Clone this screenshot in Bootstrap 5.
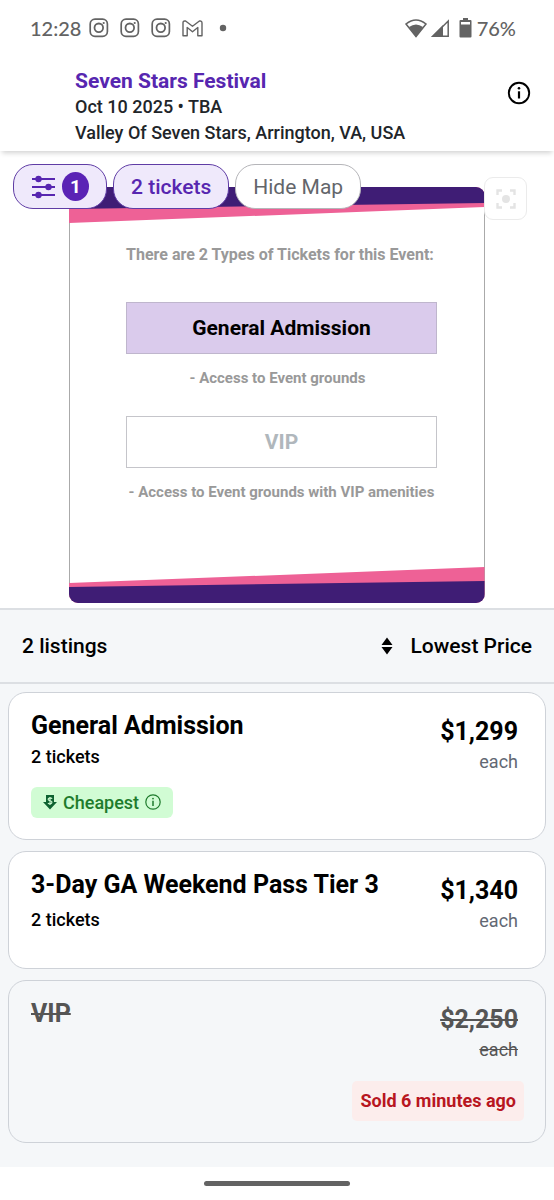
<!DOCTYPE html>
<html lang="en">
<head>
<meta charset="utf-8">
<meta name="viewport" content="width=device-width, initial-scale=1">
<title>Seven Stars Festival – Tickets</title>
<link href="https://cdn.jsdelivr.net/npm/bootstrap@5.3.0/dist/css/bootstrap.min.css" rel="stylesheet">
<style>
  body { font-family: Roboto, "Liberation Sans", sans-serif; color: #000; background: #fff; font-size: 18px; line-height: 26px; }
  svg { display: block; flex: none; }
  h1, h2, p { margin: 0; }
  .status-bar { height: 56px; padding: 0 38px 0 30px; color: #636363; font-size: 20px; font-family: Lato, Roboto, sans-serif; font-weight: 500; }
  .notices { gap: 11px; margin-left: 8px; }
  .battery { margin: 0 5px 0 10px; }
  .event-header { position: relative; z-index: 2; padding: 12px 23px 5px 75px; color: #212529; font-weight: 500; box-shadow: 0 4px 5px -2px rgba(0,0,0,.18); }
  .event-header h1 { font-size: 21px; line-height: 26px; font-weight: 700; }
  .event-header a { color: #5726b0; text-decoration: none; }
  .icon-btn { border: 0; background: none; padding: 0; color: #000; margin-top: 13px; }

  .map-area { padding: 36px 0 5px; border-bottom: 2px solid #dcdfe3; }
  .filters { top: 13px; left: 13px; gap: 6px; z-index: 1; }
  .pill { height: 45px; padding: 0 17px; border: 1px solid #b5b5b9; border-radius: 20px; background: #fff; color: #63666b; font-size: 21px; line-height: 26px; }
  .pill-on { background: #efe9fb; border-color: #5f3ca5; color: #5726b0; font-weight: 500; }
  .pill-filter { gap: 7px; }
  .pill-count { width: 27px; height: 29px; border-radius: 50%; background: #5a23b5; color: #fff; font-size: 19px; line-height: 29px; font-weight: 700; }
  .recenter { top: 26px; right: 27px; width: 43px; height: 43px; border: 1px solid #ebebeb; border-radius: 9px; background: #fff; color: #e4e4e4; padding: 0; }

  .seat-map { width: 75%; aspect-ratio: 1; border-radius: 9px; overflow: hidden; background: linear-gradient(#aaa, #aaa) left / 1px 100% no-repeat, linear-gradient(#aaa, #aaa) right / 1px 100% no-repeat, #fff; }
  .band { width: 100%; height: 36px; }
  .map-body { width: 77%; padding: 19px 0 0 9px; color: #999; font-size: 16px; font-weight: 700; white-space: nowrap; }
  .zone { height: 52px; border: 1px solid #c5c5ca; background: #fff; color: #b0b7bc; font-size: 21px; line-height: 26px; font-weight: 700; padding: 0; margin-top: 25px; }
  .zone-on { background: #dacbec; border-color: #bfb6cd; color: #000; margin-top: 34px; }
  .zone-note { font-size: 15px; padding-top: 11px; }

  .results { background: #f5f7f9; padding-bottom: 24px; }
  .results-bar { height: 74px; padding: 0 22px; border-bottom: 2px solid #dcdfe3; font-size: 21px; font-weight: 500; }
  .sort { border: 0; background: none; padding: 0; color: inherit; font-weight: 500; gap: 18px; }
  .listings { gap: 11px; }
  .listing { border: 1px solid #ced2d8; border-radius: 18px; background: #fff; padding: 19px 27px 21px 22px; }
  .listing h2, .price { font-size: 25px; line-height: 28px; font-weight: 700; }
  .listing-info { font-weight: 500; }
  .price-box { padding-top: 6px; }
  .per { color: #626873; line-height: 26px; margin-top: 3px; }
  .listing-short { padding-bottom: 34px; }
  .tag-cheap { background: #d1fcd4; color: #1e7b2c; border-radius: 6px; padding: 3px 12px; height: 31px; gap: 6px; line-height: 25px; margin-top: 17px; }
  .listing-sold { background: transparent; color: #555; }
  .listing-sold .per { color: #555; }
  .tag-sold { background: #fcedec; color: #b8161f; border-radius: 5px; padding: 7px 8px; font-weight: 700; margin: 18px -6px 0 0; line-height: 26px; }
  .home-bar { width: 146px; height: 5px; border-radius: 3px; background: #636363; margin: 14px auto; }
</style>
</head>
<body>
<svg width="0" height="0" class="position-absolute" aria-hidden="true">
  <symbol id="insta" viewBox="0 0 20 20"><rect x="1.2" y="1.2" width="17.2" height="17.2" rx="4.8" fill="none" stroke="currentColor" stroke-width="1.7"/><circle cx="9.8" cy="9.8" r="4.3" fill="none" stroke="currentColor" stroke-width="1.8"/><circle cx="14.7" cy="5" r="1.1" fill="currentColor"/></symbol>
</svg>

<div class="status-bar d-flex align-items-center">
  <span>12:28</span>
  <div class="notices d-flex align-items-center">
    <svg width="20" height="20"><use href="#insta"/></svg>
    <svg width="20" height="20"><use href="#insta"/></svg>
    <svg width="20" height="20"><use href="#insta"/></svg>
    <svg width="21" height="17" viewBox="0 0 21 17" fill="none" stroke="currentColor" stroke-width="1.4" stroke-linejoin="round"><path d="M1 15.800V2.800Q1 1 2.600 1H3.600L10.500 6.300 17.400 1H18.400Q20 1 20 2.800V15.800H15.800V7.500L10.500 11.700 5.200 7.500V15.800Z"/></svg>
    <svg class="ms-1" width="10" height="8"><circle cx="5" cy="4" r="3.200" fill="currentColor"/></svg>
  </div>
  <svg class="ms-auto" width="22" height="19" viewBox="0 0 22 19"><path d="M1 5Q11-3 21 5L11 17.500Z" fill="none" stroke="currentColor" stroke-width="1.600"/><path d="M4 8Q11 3 18 8L11 18Z" fill="currentColor"/></svg>
  <svg class="ms-1" width="18" height="18" viewBox="0 0 18 18"><path d="M0 18 12 6V18Z" fill="currentColor"/><path d="M2 17.200H17.200V2Z" fill="none" stroke="currentColor" stroke-width="1.500"/></svg>
  <svg class="battery" width="13" height="20" viewBox="0 0 13 20" fill="currentColor"><path fill-rule="evenodd" d="M4 0H9V2H11.500Q12.500 2 12.500 3V18.500Q12.500 19.500 11.500 19.500H1.500Q.5 19.500.5 18.500V3Q.5 2 1.500 2H4ZM2 4V6.500H11V4Z"/></svg>
  <span>76%</span>
</div>

<header class="event-header d-flex justify-content-between">
  <div>
    <h1><a href="#">Seven Stars Festival</a></h1>
    <p>Oct 10 2025 • TBA</p>
    <p>Valley Of Seven Stars, Arrington, VA, USA</p>
  </div>
  <button class="icon-btn align-self-start" aria-label="Event info">
    <svg width="24" height="24" viewBox="0 0 24 24"><circle cx="12" cy="12" r="10.200" fill="none" stroke="currentColor" stroke-width="1.900"/><path d="M12 10.300V17.500" stroke="currentColor" stroke-width="2.200"/><circle cx="12" cy="7.300" r="1.300" fill="currentColor"/></svg>
  </button>
</header>

<main>
  <section class="map-area position-relative">
    <div class="filters position-absolute d-flex">
      <button class="pill pill-on pill-filter d-flex align-items-center" aria-label="Filters, 1 active">
        <svg width="24" height="24" viewBox="0 0 24 24" fill="currentColor" stroke="currentColor" stroke-width="2"><path d="M1 4H24M1 12H24M1 20H24"/><g stroke="none"><circle cx="7.500" cy="4" r="3.200"/><circle cx="17.500" cy="12" r="3.200"/><circle cx="7.500" cy="20" r="3.200"/></g></svg>
        <span class="pill-count">1</span>
      </button>
      <button class="pill pill-on">2 tickets</button>
      <button class="pill">Hide Map</button>
    </div>
    <button class="recenter position-absolute d-flex align-items-center justify-content-center" aria-label="Recenter map">
      <svg width="20" height="20" viewBox="0 0 20 20"><path d="M1.500 6V1.500H6M14 1.500H18.500V6M18.500 14V18.500H14M6 18.500H1.500V14" fill="none" stroke="currentColor" stroke-width="2.400"/><circle cx="10" cy="10" r="4" fill="currentColor"/></svg>
    </button>

    <div class="seat-map mx-auto d-flex flex-column text-center">
      <svg class="band" viewBox="0 0 416 36" preserveAspectRatio="none"><path d="M0 0H416V20L0 36Z" fill="#ee6196"/><path d="M0 0H416V16L0 22Z" fill="#3f1d75"/></svg>
      <div class="map-body mx-auto d-flex flex-column">
        <p class="pe-2">There are 2 Types of Tickets for this Event:</p>
        <button class="zone zone-on">General Admission</button>
        <p class="zone-note pe-2">- Access to Event grounds</p>
        <button class="zone">VIP</button>
        <p class="zone-note">- Access to Event grounds with VIP amenities</p>
      </div>
      <svg class="band mt-auto" viewBox="0 0 416 36" preserveAspectRatio="none"><path d="M0 16 416 0V36H0Z" fill="#ee6196"/><path d="M0 20 416 14V36H0Z" fill="#3f1d75"/></svg>
    </div>
  </section>

  <section class="results">
    <div class="results-bar d-flex align-items-center justify-content-between">
      <span>2 listings</span>
      <button class="sort d-flex align-items-center">
        <svg width="12" height="18" viewBox="0 0 12 18" fill="currentColor"><path d="M6 .5 11.500 8H.5ZM6 17.500 11.500 10H.5Z"/></svg>
        Lowest Price
      </button>
    </div>

    <div class="listings d-flex flex-column px-2 pt-2">
      <article class="listing d-flex justify-content-between">
        <div class="listing-info d-flex flex-column align-items-start">
          <h2>General Admission</h2>
          <p class="mt-1">2 tickets</p>
          <span class="tag-cheap d-flex align-items-center">
            <svg width="14" height="15" viewBox="0 0 14 15"><path d="M3 0H11V7H14L7 14.500 0 7H3Z" fill="#0d6230"/><path d="M9.200 3.600Q7 2.200 5.400 3.600 4.500 5.200 7 5.700 9.600 6.200 8.700 8 7.200 9.600 4.900 8.200M7 2V10" fill="none" stroke="#d1fcd4" stroke-width="1.100"/></svg>
            Cheapest
            <svg width="16" height="16" viewBox="0 0 16 16"><circle cx="8" cy="8" r="7.200" fill="none" stroke="currentColor" stroke-width="1.200"/><path d="M8 6.800V12" stroke="currentColor" stroke-width="1.500"/><circle cx="8" cy="4.600" r=".9" fill="currentColor"/></svg>
          </span>
        </div>
        <div class="price-box text-end">
          <div class="price">$1,299</div>
          <div class="per">each</div>
        </div>
      </article>

      <article class="listing listing-short d-flex justify-content-between">
        <div class="listing-info">
          <h2>3-Day GA Weekend Pass Tier 3</h2>
          <p class="mt-2">2 tickets</p>
        </div>
        <div class="price-box text-end">
          <div class="price">$1,340</div>
          <div class="per">each</div>
        </div>
      </article>

      <article class="listing listing-sold d-flex justify-content-between">
        <h2><s>VIP</s></h2>
        <div class="price-box text-end">
          <div class="price"><s>$2,250</s></div>
          <div class="per"><s>each</s></div>
          <div class="tag-sold">Sold 6 minutes ago</div>
        </div>
      </article>
    </div>
  </section>
</main>
<div class="home-bar"></div>
<script src="https://cdn.jsdelivr.net/npm/bootstrap@5.3.0/dist/js/bootstrap.bundle.min.js"></script>
</body>
</html>
